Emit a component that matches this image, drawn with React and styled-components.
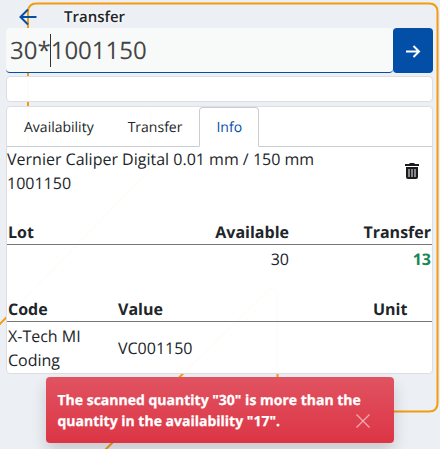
import React from "react";
import styled, { createGlobalStyle } from "styled-components";

const GlobalStyle = createGlobalStyle`
  * { box-sizing: border-box; }
  html, body { margin: 0; height: 100%; }
  body {
    background: #eceff4;
    color: #212529;
    font-family: "Open Sans", "Noto Sans", sans-serif;
    font-size: 16px;
    line-height: 24px;
    text-rendering: geometricPrecision;
  }
`;

const Screen = styled.div`
  position: relative;
  width: 440px;
  height: 449px;
  padding: 0 7px 0 6px;
  overflow: hidden;
  display: flex;
  flex-direction: column;
`;

const Backdrop = styled.svg`
  position: absolute;
  inset: 0;
  z-index: -1;
`;

const Header = styled.header`
  display: flex;
  align-items: center;
  height: 28px;
  padding: 5px 0 0 13px;
  gap: 26px;
`;

const Title = styled.h1`
  margin: 0;
  font-size: 15px;
  line-height: 22px;
  font-weight: 600;
  text-shadow: 0 0 3px #fff, 0 0 5px #fff;
`;

const ScanRow = styled.div`
  display: flex;
  height: 45px;
`;

const ScanField = styled.div`
  flex: 1;
  display: flex;
  align-items: center;
  padding: 1px 4px 0;
  border-radius: 4px;
  border-bottom: 1px solid #034ea6;
  background: #f8faf9;
  color: #444;
  font-size: 24px;
`;

const Caret = styled.span`
  width: 1px;
  height: 33px;
  margin: 0 0 0 -1px;
  background: #333;
`;

const SubmitButton = styled.button`
  display: flex;
  align-items: center;
  justify-content: center;
  width: 40px;
  padding: 0;
  border: 0;
  border-radius: 4px;
  background: #034ea6;
`;

const MessageBox = styled.div`
  height: 26px;
  margin-top: 3px;
  border: 1px solid #dcdee0;
  border-radius: 4px;
  background: rgba(255, 255, 255, 0.98);
`;

const Card = styled.main`
  height: 268px;
  margin-top: 4px;
  border: 1px solid #dcdee0;
  border-radius: 4px;
  background: rgba(255, 255, 255, 0.98);
`;

const Tabs = styled.nav`
  display: flex;
  height: 40px;
  border-bottom: 1px solid #c9ced4;
`;

const Tab = styled.button`
  height: 40px;
  padding: 2px 16px 0;
  border: 1px solid ${(p) => (p.$active ? "#c9ced4" : "transparent")};
  border-bottom-color: ${(p) => (p.$active ? "#fff" : "transparent")};
  border-radius: 4px 4px 0 0;
  background: ${(p) => (p.$active ? "#fff" : "transparent")};
  color: ${(p) => (p.$active ? "#034ea6" : "#212529")};
  font: 14px/22px "Open Sans", "Noto Sans", sans-serif;
  text-rendering: inherit;
`;

const Item = styled.section`
  display: flex;
  align-items: center;
  justify-content: space-between;
  height: 48px;
  padding-right: 13px;
`;

const Table = styled.div`
  display: grid;
  grid-template-columns: ${(p) => p.$columns};
  margin-top: ${(p) => p.$gap};
`;

const Cell = styled.div`
  display: flex;
  align-items: center;
  justify-content: ${(p) => (p.$right ? "flex-end" : "flex-start")};
  padding: ${(p) => (p.$tall ? "2px 1px 0" : "0 1px")};
`;

const HeadCell = styled(Cell)`
  height: 26px;
  border-bottom: 1px solid #777;
  font-weight: 700;
`;

const Quantity = styled(Cell)`
  height: 27px;
  color: #198754;
  font-weight: 700;
`;

const Toast = styled.div`
  position: absolute;
  left: 46px;
  top: 377px;
  width: 348px;
  height: 66px;
  padding: 13px 11.5px;
  border-radius: 4px;
  background: linear-gradient(#e15361, #dc3545);
  box-shadow: 0 8px 16px rgba(0, 0, 0, 0.16);
  color: #fff;
  font-size: 14px;
  line-height: 21px;
  font-weight: 700;
  -webkit-text-stroke: 0.25px #fff;
`;

const CloseButton = styled.button`
  position: absolute;
  right: 24px;
  bottom: 15px;
  display: flex;
  padding: 0;
  border: 0;
  background: none;
`;

const BackIcon = () => (
  <svg width="19" height="18" viewBox="0 0 19 18" fill="none" stroke="#034ea6" strokeWidth="2">
    <path d="M17.500 9H2M9 1.500L1.500 9l7.500 7.500" />
  </svg>
);

const GoIcon = () => (
  <svg width="16" height="14" viewBox="0 0 16 14" fill="none" stroke="#fff" strokeWidth="2">
    <path d="M1 7.5h13M8.5 2l5.5 5.5L8.5 13" />
  </svg>
);

const TrashIcon = () => (
  <svg width="14" height="16" viewBox="0 0 14 16">
    <path fill="#1b1b1e" d="M0 1h4l1-1h4l1 1h4v2H0zM1 4h12v10q0 2-2 2H3q-2 0-2-2z" />
    <path stroke="#85858a" strokeWidth="2" d="M4 6v8M7 6v8M10 6v8" />
  </svg>
);

export default function App() {
  return (
    <>
      <GlobalStyle />
      <Screen>
        <Backdrop width="440" height="449" fill="none" stroke="#f39c12" strokeWidth="2">
          <path d="M28 170V12q0-8.5 8.5-8.5H429q8.500 0 8.500 8.500V403q0 8.500-8.500 8.500H300" />
          <path d="M151 110V162q0 7-5 12L-3 327M277.500 412V297q0-12-9-7L104 451" />
        </Backdrop>
        <Header>
          <BackIcon />
          <Title>Transfer</Title>
        </Header>
        <ScanRow>
          <ScanField>30*<Caret />1001150</ScanField>
          <SubmitButton><GoIcon /></SubmitButton>
        </ScanRow>
        <MessageBox />
        <Card>
          <Tabs>
            <Tab>Availability</Tab>
            <Tab>Transfer</Tab>
            <Tab $active>Info</Tab>
          </Tabs>
          <Item>
            <div>Vernier Caliper Digital 0.01 mm / 150 mm<br />1001150</div>
            <TrashIcon />
          </Item>
          <Table $columns="142px 141px 1fr" $gap="24px">
            <HeadCell>Lot</HeadCell>
            <HeadCell $right>Available</HeadCell>
            <HeadCell $right>Transfer</HeadCell>
            <Cell />
            <Cell $right>30</Cell>
            <Quantity $right>13</Quantity>
          </Table>
          <Table $columns="110px 255px 1fr" $gap="24px">
            <HeadCell>Code</HeadCell>
            <HeadCell>Value</HeadCell>
            <HeadCell>Unit</HeadCell>
            <Cell $tall>X-Tech MI<br />Coding</Cell>
            <Cell $tall>VC001150</Cell>
            <Cell />
          </Table>
        </Card>
        <Toast>
          The scanned quantity "30" is more than the<br />quantity in the availability "17".
          <CloseButton>
            <svg width="14" height="14" stroke="#f4a9b0" strokeWidth="1.300"><path d="M.5.5l13 13M13.500.5l-13 13" /></svg>
          </CloseButton>
        </Toast>
      </Screen>
    </>
  );
}
